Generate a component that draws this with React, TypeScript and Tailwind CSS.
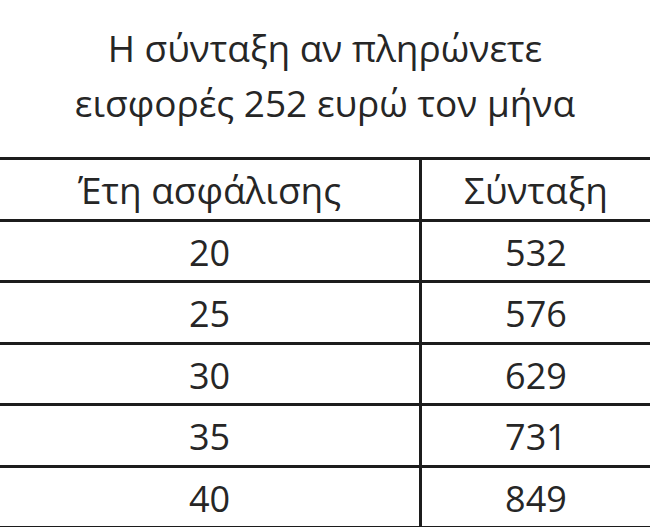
const rows = [
  { years: "20", pension: "532" },
  { years: "25", pension: "576" },
  { years: "30", pension: "629" },
  { years: "35", pension: "731" },
  { years: "40", pension: "849" },
];

export default function App() {
  return (
    <div className="w-[650px] h-[527px] overflow-hidden bg-white text-[#262626] font-['Open_Sans',sans-serif]">
      {/* Title */}
      <div className="h-[157px] pt-[20px] text-center text-[37px] leading-[55px] whitespace-nowrap">
        <p>Η σύνταξη αν πληρώνετε</p>
        <p>εισφορές 252 ευρώ τον μήνα</p>
      </div>

      {/* Table */}
      <div className="border-t-[3px] border-[#1c1c1c] text-[36px]">
        <div className="grid grid-cols-[422px_1fr] h-[61.5px] border-b-[3px] border-[#1c1c1c] text-[37px]">
          <div className="border-r-[3px] border-[#1c1c1c] text-center leading-[58.5px] pt-[1px]">Έτη ασφάλισης</div>
          <div className="text-center leading-[58.5px] pt-[1px]">Σύνταξη</div>
        </div>
        {rows.map((r) => (
          <div key={r.years} className="grid grid-cols-[422px_1fr] h-[61.5px] border-b-[3px] border-[#1c1c1c]">
            <div className="border-r-[3px] border-[#1c1c1c] text-center leading-[58.5px] pt-[2px]">{r.years}</div>
            <div className="text-center leading-[58.5px] pt-[2px]">{r.pension}</div>
          </div>
        ))}
      </div>
    </div>
  );
}
